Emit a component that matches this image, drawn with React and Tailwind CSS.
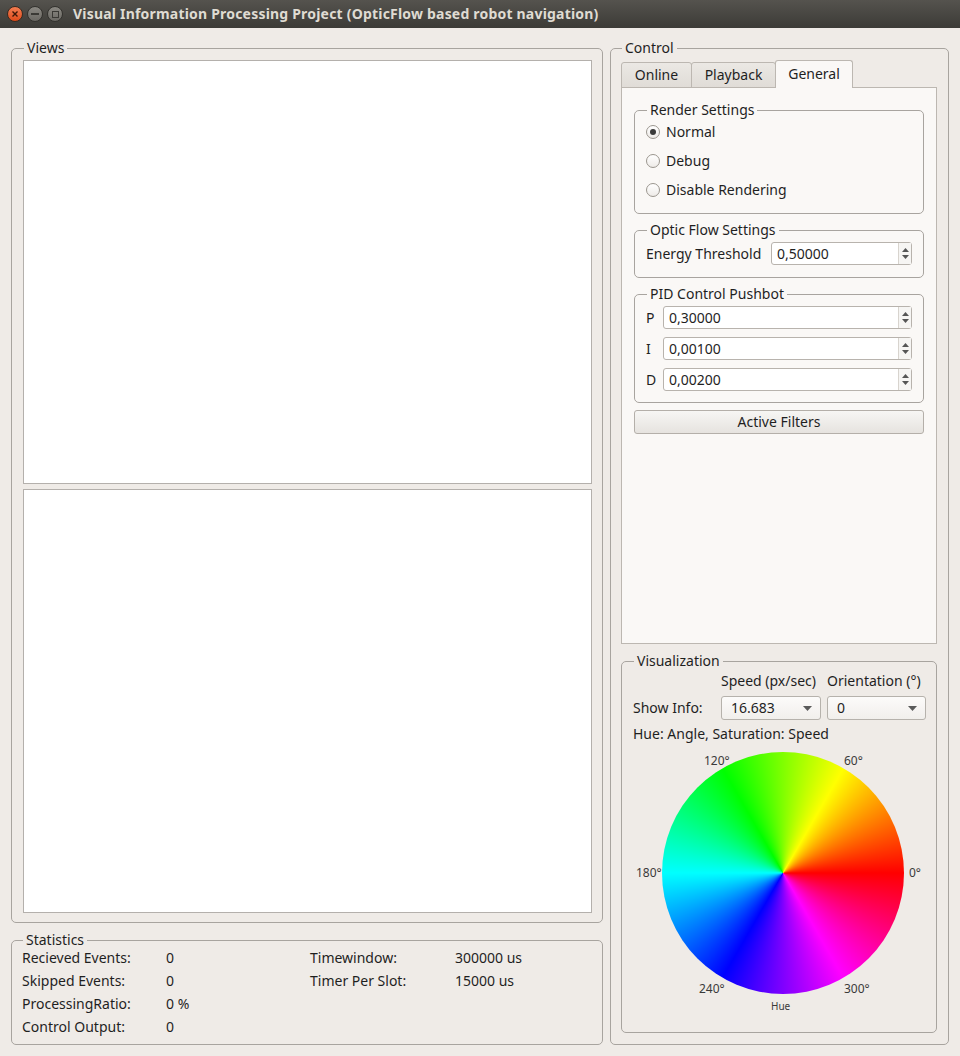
import React from 'react'

function Group({ title, className = '', children }) {
  return (
    <fieldset className={`rounded-[5px] border border-[#a8a49f] ${className}`}>
      <legend className="ml-[1px] px-[3px] text-[14px] leading-[18px]">{title}</legend>
      {children}
    </fieldset>
  )
}

function SpinBox({ value, className = '' }) {
  return (
    <div className={`flex h-[23px] rounded-[3px] border border-[#b8b3ad] bg-white ${className}`}>
      <div className="flex-1 pl-[5px] text-[14px] leading-[21px]">{value}</div>
      <div className="flex w-[13px] flex-col items-center justify-center gap-[3px] border-l border-[#d8d4ce] bg-[#f6f5f3]">
        <svg width="7" height="4" viewBox="0 0 7 4">
          <path d="M0 4L3.5 0L7 4Z" fill="#555" />
        </svg>
        <svg width="7" height="4" viewBox="0 0 7 4">
          <path d="M0 0L3.5 4L7 0Z" fill="#555" />
        </svg>
      </div>
    </div>
  )
}

function Combo({ value }) {
  return (
    <div className="flex h-[24px] items-center justify-between rounded-[3px] border border-[#b6b2ac] bg-gradient-to-b from-[#fcfbfa] to-[#f1efec] pl-[9px] pr-[8px]">
      <span>{value}</span>
      <svg width="9" height="5" viewBox="0 0 9 5">
        <path d="M0 0H9L4.5 5Z" fill="#5a5a5a" />
      </svg>
    </div>
  )
}

function Radio({ label, checked }) {
  return (
    <div className="flex h-[26px] items-center gap-[6px]">
      <span className="flex h-[14px] w-[14px] items-center justify-center rounded-full border border-[#9b968f] bg-gradient-to-b from-[#ffffff] to-[#eeebe8]">
        {checked && <span className="h-[6px] w-[6px] rounded-full bg-[#3a3a3a]" />}
      </span>
      <span>{label}</span>
    </div>
  )
}

export default function App() {
  const stats = [
    ['Recieved Events:', '0', 'Timewindow:', '300000 us'],
    ['Skipped Events:', '0', 'Timer Per Slot:', '15000 us'],
    ['ProcessingRatio:', '0 %', '', ''],
    ['Control Output:', '0', '', ''],
  ]

  return (
    <div className="h-[1056px] w-[960px] overflow-hidden bg-[#efebe7] font-['Noto_Sans',sans-serif] text-[14px] leading-[18px] text-[#1f1f1f]">
      {/* title bar */}
      <div className="flex h-[28px] items-center bg-gradient-to-b from-[#55534e] to-[#3c3b37]">
        <div className="ml-[7px] flex items-center gap-[4px]">
          <span className="flex h-[16px] w-[16px] items-center justify-center rounded-full border border-[#3a2a20] bg-gradient-to-b from-[#f27c50] to-[#df4a16]">
            <svg width="6" height="6" viewBox="0 0 6 6">
              <path d="M0.5 0.5L5.5 5.5M5.5 0.5L0.5 5.5" stroke="#3b1708" strokeWidth="1.4" />
            </svg>
          </span>
          <span className="flex h-[16px] w-[16px] items-center justify-center rounded-full border border-[#33322e] bg-gradient-to-b from-[#8a8882] to-[#6a6863]">
            <span className="h-[2px] w-[8px] bg-[#3a3935]" />
          </span>
          <span className="flex h-[16px] w-[16px] items-center justify-center rounded-full border border-[#33322e] bg-gradient-to-b from-[#8a8882] to-[#6a6863]">
            <span className="h-[7px] w-[7px] border-[1.5px] border-[#3a3935]" />
          </span>
        </div>
        <div className="ml-[10px] text-[14px] font-bold tracking-[0.2px] text-[#dfdbd2]">
          Visual Information Processing Project (OpticFlow based robot navigation)
        </div>
      </div>

      {/* body */}
      <div className="flex h-[1028px] gap-[7px] p-[11px]">
        <div className="flex w-[592px] flex-col gap-[8px]">
          <Group title="Views" className="pb-[9px] pl-[11px] pr-[10px] pt-[3px]">
            <div className="flex flex-col gap-[5px]">
              <div className="h-[424px] border border-[#b4b0ac] bg-white" />
              <div className="h-[424px] border border-[#b4b0ac] bg-white" />
            </div>
          </Group>

          <Group title="Statistics" className="pb-[8px] pl-[10px] pr-[10px]">
            <div className="grid grid-cols-[144px_144px_145px_1fr] gap-y-[5px]">
              {stats.map((r, i) => (
                <React.Fragment key={i}>
                  <div>{r[0]}</div>
                  <div>{r[1]}</div>
                  <div>{r[2]}</div>
                  <div>{r[3]}</div>
                </React.Fragment>
              ))}
            </div>
          </Group>
        </div>

        <Group title="Control" className="flex-1 pb-[11px] pl-[10px] pr-[11px] pt-[3px]">
          {/* tabs */}
          <div className="relative z-10 -mb-px flex h-[28px] items-end">
            <div className="flex h-[26px] w-[71px] items-center justify-center rounded-t-[3px] border border-[#bcb7b1] bg-gradient-to-b from-[#ebe8e4] to-[#e0dcd7]">
              Online
            </div>
            <div className="-ml-px flex h-[26px] w-[85px] items-center justify-center rounded-t-[3px] border border-[#bcb7b1] bg-gradient-to-b from-[#ebe8e4] to-[#e0dcd7]">
              Playback
            </div>
            <div className="-ml-px flex h-[28px] w-[78px] items-center justify-center rounded-t-[3px] border border-b-0 border-[#bcb7b1] bg-[#faf8f6] pb-[2px]">
              General
            </div>
          </div>

          {/* tab panel */}
          <div className="h-[557px] border border-[#bcb7b1] bg-[#faf8f6] px-[12px] pt-[13px]">
            <Group title="Render Settings" className="pb-[10px] pl-[11px] pr-[11px]">
              <div className="flex flex-col gap-[3px]">
                <Radio label="Normal" checked />
                <Radio label="Debug" />
                <Radio label="Disable Rendering" />
              </div>
            </Group>

            <Group title="Optic Flow Settings" className="mt-[7px] pb-[12px] pl-[11px] pr-[11px] pt-[3px]">
              <div className="flex items-center">
                <span>Energy Threshold</span>
                <SpinBox value="0,50000" className="ml-auto w-[141px]" />
              </div>
            </Group>

            <Group title="PID Control Pushbot" className="mt-[7px] pb-[11px] pl-[11px] pr-[11px] pt-[3px]">
              <div className="flex flex-col gap-[8px]">
                {[
                  ['P', '0,30000'],
                  ['I', '0,00100'],
                  ['D', '0,00200'],
                ].map(([k, v]) => (
                  <div key={k} className="flex items-center">
                    <span className="w-[17px]">{k}</span>
                    <SpinBox value={v} className="flex-1" />
                  </div>
                ))}
              </div>
            </Group>

            <button className="mt-[7px] h-[24px] w-full rounded-[3px] border border-[#b4afa9] bg-gradient-to-b from-[#f7f6f4] to-[#e6e3df] text-[14px]">
              Active Filters
            </button>
          </div>

          {/* visualization */}
          <Group title="Visualization" className="mt-[8px] pb-[11px] pl-[11px] pr-[10px]">
            <div className="grid grid-cols-[82px_100px_1fr] gap-x-[6px]">
              <div className="h-[20px]" />
              <div className="h-[20px] leading-[22px]">Speed (px/sec)</div>
              <div className="h-[20px] whitespace-nowrap leading-[22px]">Orientation (°)</div>
              <div className="mt-[6px] flex h-[24px] items-center">Show Info:</div>
              <div className="mt-[6px]">
                <Combo value="16.683" />
              </div>
              <div className="mt-[6px]">
                <Combo value="0" />
              </div>
            </div>
            <div className="mt-[5px] h-[18px]">Hue: Angle, Saturation: Speed</div>

            <div className="relative h-[278px] text-[12px] leading-[14px] text-[#3a3a3a]">
              <div className="absolute left-[29px] top-[9px] h-[242px] w-[242px] rounded-full bg-[conic-gradient(from_90deg,#ff0000,#ff00ff,#0000ff,#00ffff,#00ff00,#ffff00,#ff0000)] blur-[0.5px]" />
              <span className="absolute left-[71px] top-[11px]">120°</span>
              <span className="absolute left-[211px] top-[11px]">60°</span>
              <span className="absolute left-[3px] top-[123px]">180°</span>
              <span className="absolute left-[276px] top-[123px]">0°</span>
              <span className="absolute left-[66px] top-[239px]">240°</span>
              <span className="absolute left-[211px] top-[239px]">300°</span>
              <span className="absolute left-[138px] top-[256px] text-[10px]">Hue</span>
            </div>
          </Group>
        </Group>
      </div>
    </div>
  )
}
